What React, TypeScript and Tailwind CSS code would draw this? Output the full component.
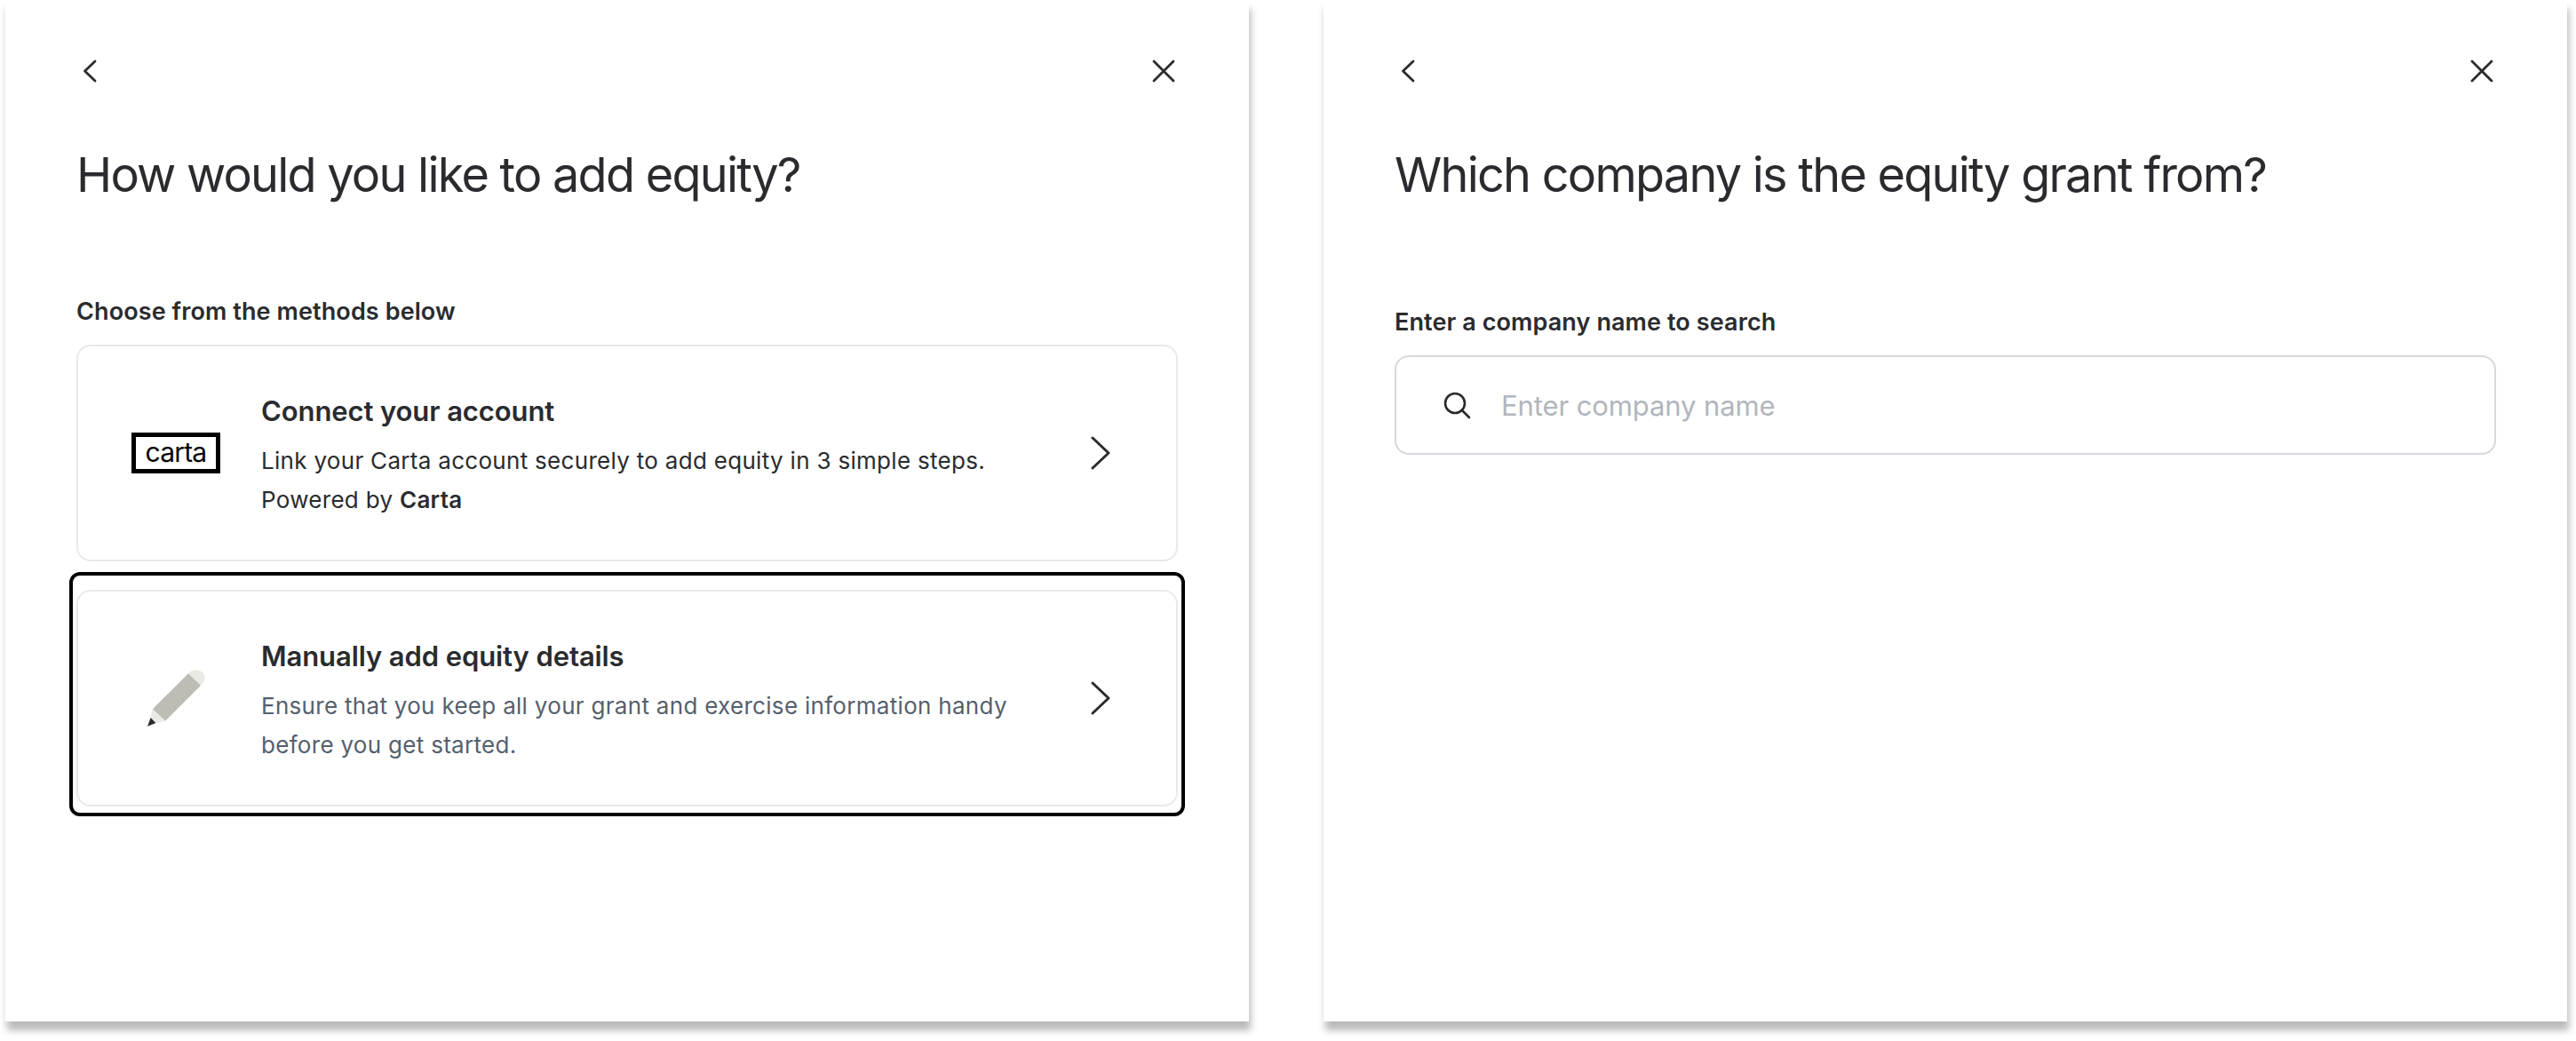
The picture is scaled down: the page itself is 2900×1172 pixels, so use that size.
import React from "react";

function Back() {
  return (
    <svg width="32" height="32" viewBox="0 0 32 32" fill="none" stroke="#2a2b2e" strokeWidth="2.8" strokeLinecap="round" strokeLinejoin="round">
      <path d="M21 5 L9.5 16 L21 27" />
    </svg>
  );
}
function Close() {
  return (
    <svg width="32" height="32" viewBox="0 0 32 32" fill="none" stroke="#2a2b2e" strokeWidth="2.8" strokeLinecap="round">
      <path d="M5 5 L27 27 M27 5 L5 27" />
    </svg>
  );
}
function Chevron() {
  return (
    <svg width="24" height="40" viewBox="0 0 24 40" fill="none" stroke="#2a2b2e" strokeWidth="3" strokeLinecap="round" strokeLinejoin="round">
      <path d="M3 3 L21 20 L3 37" />
    </svg>
  );
}
function Pencil() {
  return (
    <svg width="65" height="64" viewBox="0 0 65 64">
      <path d="M46 4.3 C50 -1 58 -1 62 3 C66 7 65 12.5 60 17.7 Z" fill="#ebe9e4" />
      <path d="M5.8 44.3 L46 4.3 L60 17.7 L20 57.7 Z" fill="#bdbcb5" />
      <path d="M5.8 44.3 L20 57.7 L9.4 60 L3.6 54 Z" fill="#ebe9e4" />
      <path d="M0 63.7 L3.6 54 L9.4 60 Z" fill="#2a2b2e" />
    </svg>
  );
}
function Carta() {
  return (
    <div className="flex h-[46px] w-[100px] items-center justify-center border-[5px] border-black pb-[2px] text-[30px] leading-none tracking-[-0.8px] text-black">
      carta
    </div>
  );
}

function Header() {
  return (
    <div className="flex h-8 items-center justify-between">
      <Back />
      <Close />
    </div>
  );
}

function Card({ icon, title, children }: { icon: React.ReactNode; title: string; children: React.ReactNode }) {
  return (
    <div className="flex h-[244px] items-center rounded-2xl border-2 border-[#e9e9e9] bg-white">
      <div className="flex w-[205px] shrink-0 justify-center pl-[15px]">{icon}</div>
      <div className="flex-1 pl-px pt-[5px]">
        <div className="text-[31px] font-semibold leading-[44px] tracking-[-0.1px] text-[#2a2b2e]">{title}</div>
        <div className="mt-[12px] text-[26px] leading-[44px] tracking-[0.3px]">{children}</div>
      </div>
      <div className="mr-[73px] shrink-0">
        <Chevron />
      </div>
    </div>
  );
}

function Panel({ children }: { children: React.ReactNode }) {
  return (
    <div className="h-[1150px] w-[1400px] bg-white px-20 pt-16 shadow-[2px_10px_8px_rgba(0,0,0,0.28)]">
      {children}
    </div>
  );
}

const titleClass = "mt-[65px] text-[54px] font-normal leading-[72px] tracking-[-1.75px] text-[#2a2b2e]";
const labelClass = "text-[27px] font-semibold leading-[36px] tracking-[0.1px] text-[#2a2b2e]";

export default function App() {
  return (
    <div
      className="flex h-[1172px] w-[2900px] gap-[84px] bg-white pl-[6px]"
      style={{ fontFamily: "Inter, sans-serif" }}
    >
      <Panel>
        <Header />
        <h1 className={titleClass}>How would you like to add equity?</h1>
        <div className={"mt-[100px] " + labelClass}>Choose from the methods below</div>
        <div className="mt-[19px]">
          <Card icon={<Carta />} title="Connect your account">
            <span className="text-[#2a2b2e]">
              Link your Carta account securely to add equity in 3 simple steps.
              <br />
              Powered by <b className="font-semibold">Carta</b>
            </span>
          </Card>
        </div>
        <div className="-mx-2 mt-3 rounded-xl border-4 border-black px-1 pb-[7px] pt-4">
          <Card icon={<Pencil />} title="Manually add equity details">
            <span className="text-[#55606d]">
              Ensure that you keep all your grant and exercise information handy
              <br />
              before you get started.
            </span>
          </Card>
        </div>
      </Panel>
      <Panel>
        <Header />
        <h1 className={titleClass}>Which company is the equity grant from?</h1>
        <div className={"mt-[112px] " + labelClass}>Enter a company name to search</div>
        <div className="mt-[19px] flex h-[112px] items-center rounded-2xl border-2 border-[#d5d9dd] pl-[52px]">
          <svg width="32" height="32" viewBox="0 0 32 32" fill="none" stroke="#2a2b2e" strokeWidth="2.6" strokeLinecap="round">
            <circle cx="14" cy="14" r="11" />
            <path d="M22 22 L30 30" />
          </svg>
          <input
            className="ml-[34px] flex-1 bg-transparent pt-[3px] text-[31px] tracking-[-0.1px] text-[#2a2b2e] outline-none placeholder:text-[#b1b6bc]"
            placeholder="Enter company name"
          />
        </div>
      </Panel>
    </div>
  );
}
